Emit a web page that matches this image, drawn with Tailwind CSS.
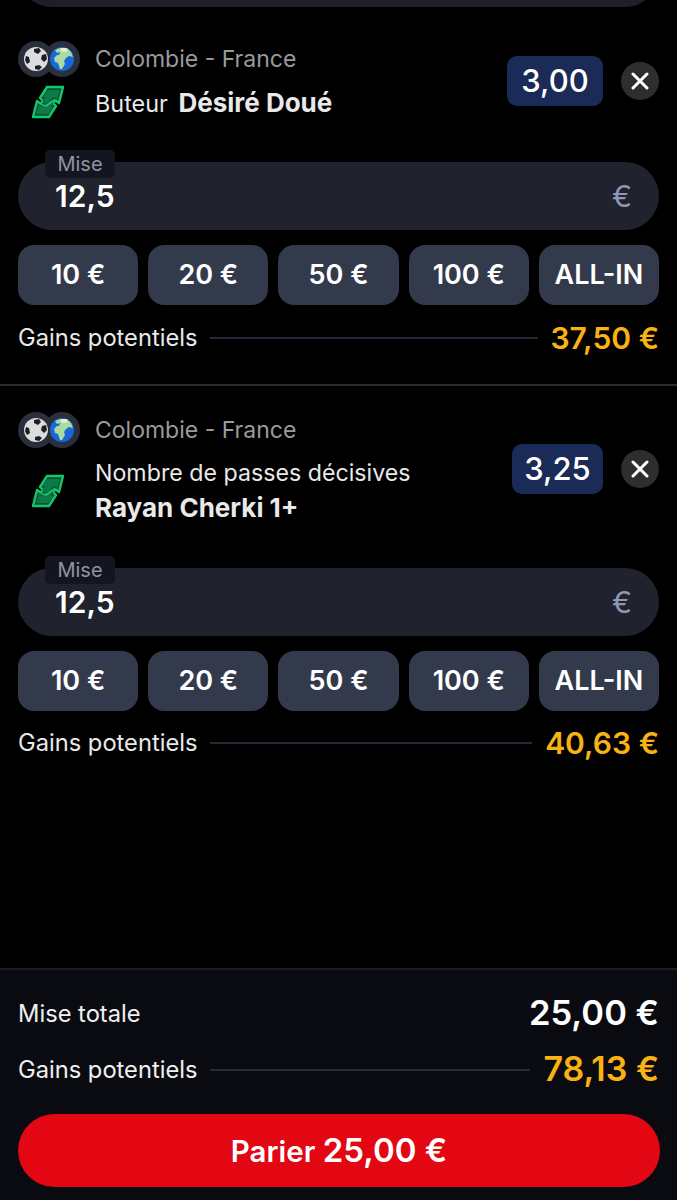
<!DOCTYPE html>
<html lang="en">
<head>
  <meta charset="UTF-8" />
  <meta name="viewport" content="width=device-width, initial-scale=1" />
  <title>Coupon</title>
  <script src="https://cdn.jsdelivr.net/npm/@tailwindcss/browser@4"></script>
</head>
<body class="bg-black h-[1200px] w-[677px] overflow-hidden flex flex-col font-['Inter','Liberation_Sans',sans-serif] text-white">

  <!-- Previous stake input, cut off by the top of the screen -->
  <div class="mx-[18px] h-[68px] -mt-[61px] rounded-full bg-[#1d1f2a] shrink-0"></div>

  <!-- Bet 1 -->
  <section class="px-[18px] pt-[29px] h-[379px] border-b-2 border-[#2a2c38] shrink-0">
    <div class="flex items-center h-[90px]">
      <div class="w-[77px] shrink-0 self-start mt-[5px] flex flex-col gap-[8px]">
        <svg class="w-[62px] h-[36px]" viewBox="0 0 62 36">
          <circle cx="18" cy="18" r="18" fill="#2b2e3b"/>
          <circle cx="44" cy="18" r="18" fill="#2b2e3b"/>
          <circle cx="18" cy="18" r="12" fill="#dcdcdc"/>
          <path d="M16 8l5-1 2 3-3 3-4-2zM24 14l4-1 1 5-3 3-3-3zM8 15l3 1 1 5-3 2-2-4zM17 25l4-1 3 2-3 3-4-1z" fill="#1d1e24"/>
          <circle cx="44" cy="18" r="12" fill="#1769d8"/>
          <path d="M37 9l5-2 7 0 4 4 2 5-4-1-3 2-2 3 1 3-3 5-2 0-2-6-3-1-1-4 3-3 2 0 1-3-3 1z" fill="#a9dba2"/>
          <path d="M43 7l5 0 2 3-4 1-3-1z" fill="#e6eed0"/>
        </svg>
        <svg class="w-[34px] h-[34px] ml-[13px]" viewBox="0 0 34 34">
          <path d="M16 2H32L28 18 24.5 15.5 22 18 25 21 18 32H2L6 16 9.5 18.5 12 16 9 13Z" fill="#0b5236" stroke="#12c769" stroke-width="2.4" stroke-linejoin="round"/>
          <path d="M17 5H29L26 14 23 12 14 19 11 16 14 13 12 11ZM17 29H5L8 20 11 22 20 15 23 18 20 21 22 23Z" fill="#0f7a49"/>
          <path d="M10 19.5L15 21 24 14.5" fill="none" stroke="#12c769" stroke-width="1.8" stroke-linejoin="round"/>
        </svg>
      </div>
      <div class="flex-1 flex flex-col gap-[16px]">
        <p class="text-[23px] leading-[28px] text-[#9a9a9c]">Colombie - France</p>
        <p class="text-[23.4px] leading-[28px] text-[#e9e9ea]">Buteur <span class="text-[26px] font-bold ml-1">Désiré Doué</span></p>
      </div>
      <div class="w-[96px] h-[50px] rounded-[10px] bg-[#1a2b57] flex items-center justify-center text-[31px] font-medium">3,00</div>
      <button class="ml-[18px] w-[38px] h-[38px] rounded-full bg-[#2e2e2e] flex items-center justify-center">
        <svg class="w-[18px] h-[18px]" viewBox="0 0 18 18"><path d="M2 2l14 14M16 2L2 16" stroke="#fff" stroke-width="3" stroke-linecap="round"/></svg>
      </button>
    </div>

    <div class="relative mt-[36px] h-[68px] rounded-full bg-[#20222e] flex items-center justify-between pl-[37px] pr-[27px]">
      <span class="absolute left-[27px] -top-[12px] w-[70px] h-[28px] rounded-[5px] bg-[#14161f] text-[#8f93a5] text-[20px] leading-[28px] text-center">Mise</span>
      <span class="text-[30px] font-semibold">12,5</span>
      <span class="text-[30px] text-[#9096b5]">€</span>
    </div>

    <div class="mt-[15px] flex gap-[10px]">
      <button class="flex-1 h-[60px] rounded-[16px] bg-[#333a4b] text-[27px] font-semibold">10 €</button>
      <button class="flex-1 h-[60px] rounded-[16px] bg-[#333a4b] text-[27px] font-semibold">20 €</button>
      <button class="flex-1 h-[60px] rounded-[16px] bg-[#333a4b] text-[27px] font-semibold">50 €</button>
      <button class="flex-1 h-[60px] rounded-[16px] bg-[#333a4b] text-[27px] font-semibold">100 €</button>
      <button class="flex-1 h-[60px] rounded-[16px] bg-[#333a4b] text-[27px] font-semibold">ALL-IN</button>
    </div>

    <div class="mt-[16px] flex items-center h-[34px]">
      <span class="text-[23.7px] text-[#e9e9ea]">Gains potentiels</span>
      <span class="flex-1 h-[2px] bg-[#262a38] mx-[13px]"></span>
      <span class="text-[30px] font-semibold text-[#f9b114]">37,50 €</span>
    </div>
  </section>

  <!-- Bet 2 -->
  <section class="px-[18px] pt-[23px] flex-1">
    <div class="flex items-center h-[120px]">
      <div class="w-[77px] shrink-0 self-start mt-[3px] flex flex-col gap-[26px]">
        <svg class="w-[62px] h-[36px]" viewBox="0 0 62 36">
          <circle cx="18" cy="18" r="18" fill="#2b2e3b"/>
          <circle cx="44" cy="18" r="18" fill="#2b2e3b"/>
          <circle cx="18" cy="18" r="12" fill="#dcdcdc"/>
          <path d="M16 8l5-1 2 3-3 3-4-2zM24 14l4-1 1 5-3 3-3-3zM8 15l3 1 1 5-3 2-2-4zM17 25l4-1 3 2-3 3-4-1z" fill="#1d1e24"/>
          <circle cx="44" cy="18" r="12" fill="#1769d8"/>
          <path d="M37 9l5-2 7 0 4 4 2 5-4-1-3 2-2 3 1 3-3 5-2 0-2-6-3-1-1-4 3-3 2 0 1-3-3 1z" fill="#a9dba2"/>
          <path d="M43 7l5 0 2 3-4 1-3-1z" fill="#e6eed0"/>
        </svg>
        <svg class="w-[34px] h-[34px] ml-[13px]" viewBox="0 0 34 34">
          <path d="M16 2H32L28 18 24.5 15.5 22 18 25 21 18 32H2L6 16 9.5 18.5 12 16 9 13Z" fill="#0b5236" stroke="#12c769" stroke-width="2.4" stroke-linejoin="round"/>
          <path d="M17 5H29L26 14 23 12 14 19 11 16 14 13 12 11ZM17 29H5L8 20 11 22 20 15 23 18 20 21 22 23Z" fill="#0f7a49"/>
          <path d="M10 19.5L15 21 24 14.5" fill="none" stroke="#12c769" stroke-width="1.8" stroke-linejoin="round"/>
        </svg>
      </div>
      <div class="flex-1 flex flex-col">
        <p class="text-[23px] leading-[28px] text-[#9a9a9c]">Colombie - France</p>
        <p class="mt-[15px] text-[23.2px] leading-[28px] text-[#e9e9ea]">Nombre de passes décisives</p>
        <p class="mt-[7px] text-[26px] leading-[28px] font-bold text-[#e9e9ea]">Rayan Cherki 1+</p>
      </div>
      <div class="w-[91px] h-[50px] rounded-[10px] bg-[#1a2b57] flex items-center justify-center text-[31px] font-medium">3,25</div>
      <button class="ml-[18px] w-[38px] h-[38px] rounded-full bg-[#2e2e2e] flex items-center justify-center">
        <svg class="w-[18px] h-[18px]" viewBox="0 0 18 18"><path d="M2 2l14 14M16 2L2 16" stroke="#fff" stroke-width="3" stroke-linecap="round"/></svg>
      </button>
    </div>

    <div class="relative mt-[39px] h-[68px] rounded-full bg-[#20222e] flex items-center justify-between pl-[37px] pr-[27px]">
      <span class="absolute left-[27px] -top-[12px] w-[70px] h-[28px] rounded-[5px] bg-[#14161f] text-[#8f93a5] text-[20px] leading-[28px] text-center">Mise</span>
      <span class="text-[30px] font-semibold">12,5</span>
      <span class="text-[30px] text-[#9096b5]">€</span>
    </div>

    <div class="mt-[15px] flex gap-[10px]">
      <button class="flex-1 h-[60px] rounded-[16px] bg-[#333a4b] text-[27px] font-semibold">10 €</button>
      <button class="flex-1 h-[60px] rounded-[16px] bg-[#333a4b] text-[27px] font-semibold">20 €</button>
      <button class="flex-1 h-[60px] rounded-[16px] bg-[#333a4b] text-[27px] font-semibold">50 €</button>
      <button class="flex-1 h-[60px] rounded-[16px] bg-[#333a4b] text-[27px] font-semibold">100 €</button>
      <button class="flex-1 h-[60px] rounded-[16px] bg-[#333a4b] text-[27px] font-semibold">ALL-IN</button>
    </div>

    <div class="mt-[15px] flex items-center h-[34px]">
      <span class="text-[23.7px] text-[#e9e9ea]">Gains potentiels</span>
      <span class="flex-1 h-[2px] bg-[#262a38] mx-[13px]"></span>
      <span class="text-[30px] font-semibold text-[#f9b114]">40,63 €</span>
    </div>
  </section>

  <!-- Totals -->
  <footer class="h-[232px] shrink-0 bg-[#0a0b10] border-t-2 border-[#1b1c24] px-[18px] pt-[22px]">
    <div class="flex items-center justify-between h-[44px]">
      <span class="text-[23.7px] text-[#f0f0f0]">Mise totale</span>
      <span class="text-[34.5px] font-semibold mb-[3px]">25,00 €</span>
    </div>
    <div class="mt-[12px] flex items-center h-[44px]">
      <span class="text-[23.7px] text-[#f0f0f0]">Gains potentiels</span>
      <span class="flex-1 h-[2px] bg-[#2a2b33] mx-[13px]"></span>
      <span class="text-[34px] font-semibold text-[#f9b114] mb-[3px]">78,13 €</span>
    </div>
    <button class="mt-[22px] w-[642px] h-[73px] rounded-full bg-[#e30613] text-[29.5px] font-semibold">Parier <span class="text-[33px]">25,00 €</span></button>
  </footer>
</body>
</html>
